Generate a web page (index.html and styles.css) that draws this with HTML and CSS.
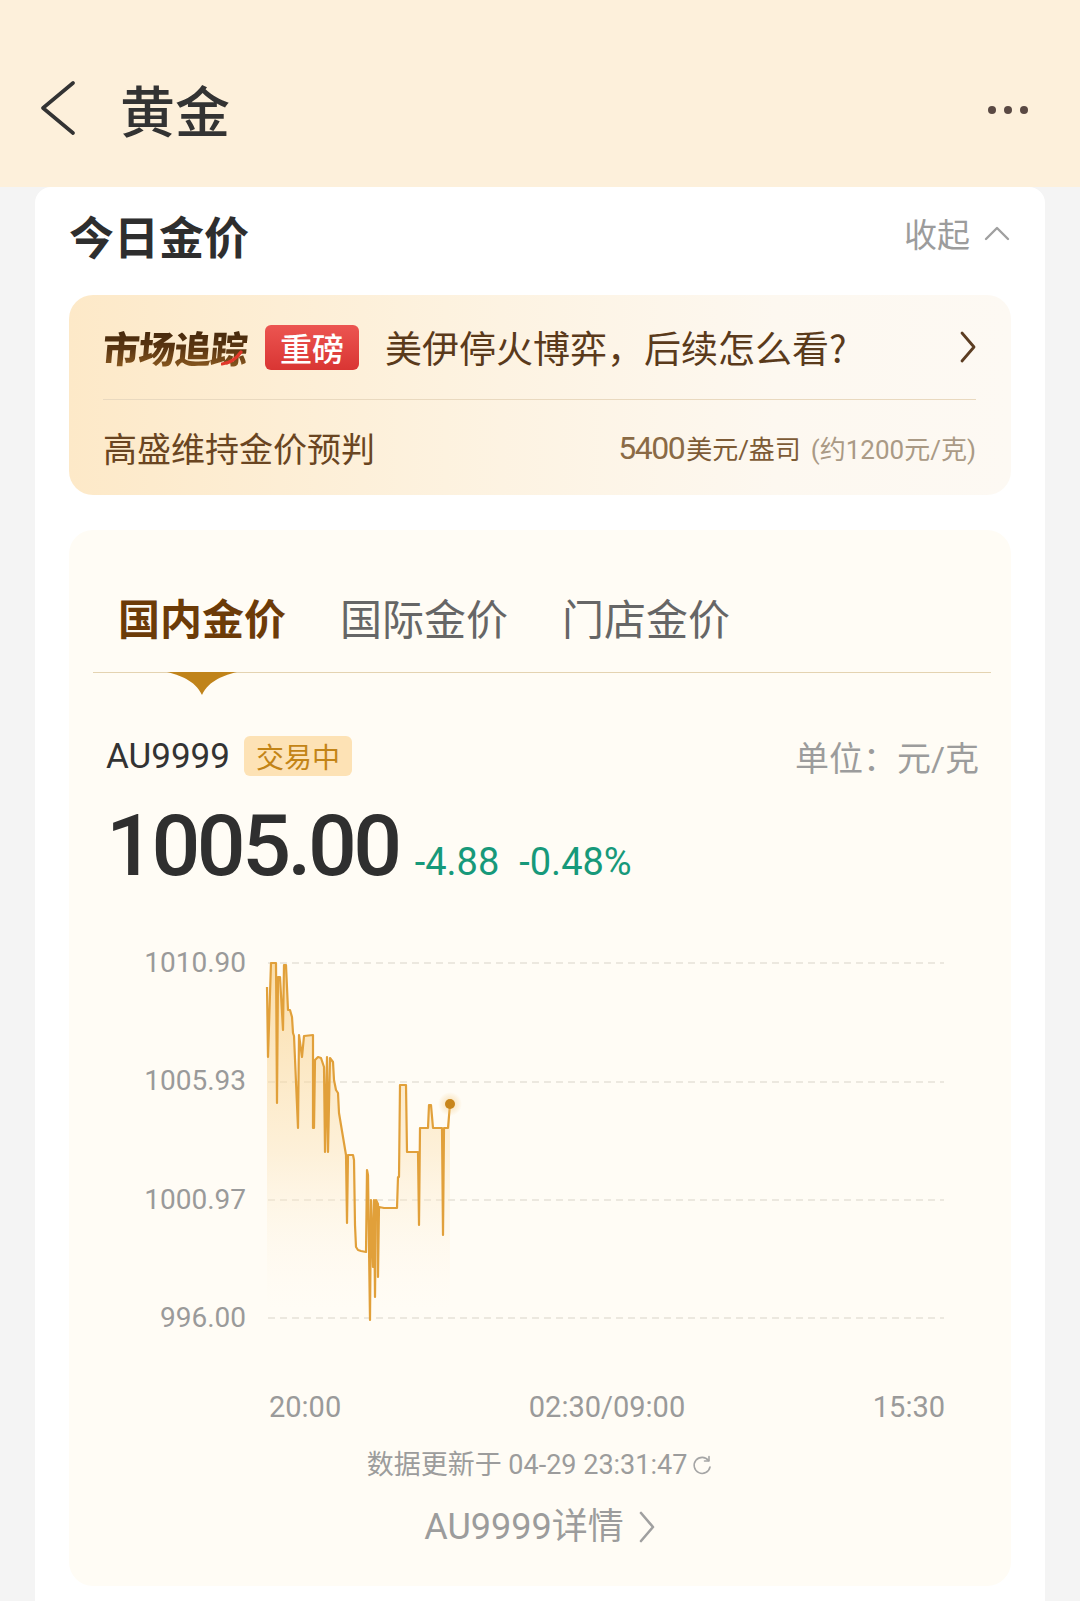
FILE: index.html
```html
<!DOCTYPE html>
<html lang="zh-CN">
<head>
<meta charset="utf-8">
<title>黄金</title>
<link rel="stylesheet" href="styles.css">
</head>
<body>
<header class="topbar">
  <div class="topbar-row">
    <svg class="back" width="36" height="54" viewBox="0 0 36 54"><polyline points="33,2 3,27 33,52" fill="none" stroke="#333" stroke-width="3.6" stroke-linecap="round" stroke-linejoin="round"/></svg>
    <h1 class="title">黄金</h1>
    <div class="more"><span></span><span></span><span></span></div>
  </div>
</header>

<main class="sheet">
  <div class="sheet-head">
    <h2 class="sheet-title">今日金价</h2>
    <div class="collapse">收起<svg width="26" height="15" viewBox="0 0 26 15"><polyline points="2,13 13,2 24,13" fill="none" stroke="#a0a0a0" stroke-width="2.4" stroke-linecap="round" stroke-linejoin="round"/></svg></div>
  </div>

  <div class="tracker">
    <div class="tracker-top">
      <span class="tracker-logo"><span class="logo-text">市场追踪</span><svg class="swoosh" width="22" height="16" viewBox="0 0 22 16"><path d="M1 14 Q12 13 20 2" fill="none" stroke="#e2382a" stroke-width="3.2" stroke-linecap="round"/></svg></span>
      <span class="badge-red">重磅</span>
      <span class="tracker-title">美伊停火博弈，后续怎么看?</span>
      <svg class="tracker-arrow" width="18" height="32" viewBox="0 0 18 32"><polyline points="3,2 15,16 3,30" fill="none" stroke="#5c3d22" stroke-width="2.8" stroke-linecap="round" stroke-linejoin="round"/></svg>
    </div>
    <div class="tracker-line"></div>
    <div class="tracker-bottom">
      <span class="tracker-sub">高盛维持金价预判</span>
      <span class="forecast"><span class="fc-num">5400</span><span class="fc-unit">美元/盎司</span><span class="fc-note">(约1200元/克)</span></span>
    </div>
  </div>

  <section class="price-card">
    <div class="tabs">
      <span class="tab tab-active">国内金价</span>
      <span class="tab">国际金价</span>
      <span class="tab">门店金价</span>
      <svg class="tab-pointer" width="70" height="24" viewBox="0 0 70 24"><path d="M0 0 H70 C58 3 42 8 35 23 C28 8 12 3 0 0 Z" fill="#c0831a"/></svg>
    </div>

    <div class="info-row">
      <span class="code">AU9999</span>
      <span class="status">交易中</span>
      <span class="unit">单位：元/克</span>
    </div>

    <div class="price-row">
      <span class="price">1005.00</span>
      <span class="chg">-4.88</span>
      <span class="chg">-0.48%</span>
    </div>

    <svg class="chart" width="942" height="420" viewBox="68 930 942 420">
      <defs>
        <linearGradient id="fillg" x1="0" y1="963" x2="0" y2="1310" gradientUnits="userSpaceOnUse">
          <stop offset="0" stop-color="#f7c977" stop-opacity="0.6"/>
          <stop offset="0.55" stop-color="#fbe2b6" stop-opacity="0.45"/>
          <stop offset="1" stop-color="#fff6e6" stop-opacity="0"/>
        </linearGradient>
        <radialGradient id="halo">
          <stop offset="0" stop-color="#f2c679" stop-opacity="0.6"/>
          <stop offset="1" stop-color="#f2c679" stop-opacity="0"/>
        </radialGradient>
      </defs>
      <g stroke="#e6e1d8" stroke-width="1.6" stroke-dasharray="7 5">
        <line x1="267" y1="963" x2="943" y2="963"/>
        <line x1="267" y1="1082" x2="943" y2="1082"/>
        <line x1="267" y1="1200" x2="943" y2="1200"/>
        <line x1="267" y1="1318" x2="943" y2="1318"/>
      </g>
      <g class="ylab" text-anchor="end">
        <text x="245" y="972">1010.90</text>
        <text x="245" y="1090">1005.93</text>
        <text x="245" y="1209">1000.97</text>
        <text x="245" y="1327">996.00</text>
      </g>
      <path fill="url(#fillg)" d="M266,987 L267,1057 L270,963 L275,963 L276,1103 L277,977 L279,977 L282,1030 L283,965 L285,965 L287,1010 L289,1010 L291,1017 L292,1033 L293,1036 L297,1128 L298,1035 L301,1057 L303,1036 L312,1035 L312,1128 L313,1128 L314,1060 L317,1057 L320,1058 L323,1067 L324,1152 L326,1057 L327,1152 L329,1058 L332,1062 L333,1080 L335,1090 L337,1093 L338,1113 L343,1143 L345,1155 L346,1223 L347,1155 L352,1155 L353,1160 L354,1225 L355,1247 L357,1250 L360,1251 L365,1252 L366,1170 L367,1175 L369,1320 L370,1200 L372,1267 L373,1200 L374,1297 L375,1200 L377,1204 L377,1277 L378,1207 L383,1208 L396,1208 L397,1177 L398,1177 L399,1085 L405,1085 L406,1152 L417,1152 L418,1225 L419,1128 L427,1128 L428,1105 L430,1105 L432,1128 L441,1128 L442,1235 L443,1128 L447,1128 L449,1104 L449,1330 L266,1330 Z"/>
      <path fill="none" stroke="#e1a03a" stroke-width="2.2" stroke-linejoin="round" d="M266,987 L267,1057 L270,963 L275,963 L276,1103 L277,977 L279,977 L282,1030 L283,965 L285,965 L287,1010 L289,1010 L291,1017 L292,1033 L293,1036 L297,1128 L298,1035 L301,1057 L303,1036 L312,1035 L312,1128 L313,1128 L314,1060 L317,1057 L320,1058 L323,1067 L324,1152 L326,1057 L327,1152 L329,1058 L332,1062 L333,1080 L335,1090 L337,1093 L338,1113 L343,1143 L345,1155 L346,1223 L347,1155 L352,1155 L353,1160 L354,1225 L355,1247 L357,1250 L360,1251 L365,1252 L366,1170 L367,1175 L369,1320 L370,1200 L372,1267 L373,1200 L374,1297 L375,1200 L377,1204 L377,1277 L378,1207 L383,1208 L396,1208 L397,1177 L398,1177 L399,1085 L405,1085 L406,1152 L417,1152 L418,1225 L419,1128 L427,1128 L428,1105 L430,1105 L432,1128 L441,1128 L442,1235 L443,1128 L447,1128 L449,1104"/>
      <circle cx="449" cy="1104" r="12" fill="url(#halo)"/>
      <circle cx="449" cy="1104" r="5" fill="#c8861c"/>
    </svg>

    <div class="xaxis"><span>20:00</span><span>02:30/09:00</span><span>15:30</span></div>

    <div class="updated">数据更新于 04-29 23:31:47<svg class="refresh" width="22" height="22" viewBox="0 0 22 22"><path d="M17.5 5.5 A8 8 0 1 0 19 12" fill="none" stroke="#a5a5a5" stroke-width="1.6" stroke-linecap="round"/><polyline points="18,1.5 18,6 13.5,6" fill="none" stroke="#a5a5a5" stroke-width="1.6" stroke-linecap="round" stroke-linejoin="round"/></svg></div>

    <div class="detail">AU9999详情<svg width="18" height="32" viewBox="0 0 18 32"><polyline points="3,2 15,16 3,30" fill="none" stroke="#a0a0a0" stroke-width="2.6" stroke-linecap="round" stroke-linejoin="round"/></svg></div>
  </section>
</main>
</body>
</html>
```

FILE: styles.css
```css
* { box-sizing: border-box; }

html, body {
  margin: 0;
  padding: 0;
}

body {
  background: #f4f4f4;
  font-family: Roboto, "Noto Sans CJK SC", sans-serif;
  color: #333;
  width: 1080px;
  height: 1601px;
  overflow: hidden;
}

/* ---------- top bar ---------- */
.topbar {
  height: 187px;
  background: #fdf0db;
  padding-top: 80px;
}

.topbar-row {
  height: 56px;
  display: flex;
  align-items: center;
}

.back {
  margin-left: 40px;
  flex: none;
}

.title {
  margin: 0 0 0 44px;
  font-family: "Noto Sans CJK SC", sans-serif;
  font-size: 55px;
  line-height: 56px;
  font-weight: 500;
  color: #333;
}

.more {
  margin-left: auto;
  margin-right: 52px;
  margin-top: 4px;
  display: flex;
  gap: 8px;
}

.more span {
  width: 8px;
  height: 8px;
  border-radius: 50%;
  background: #5a4943;
}

/* ---------- white sheet ---------- */
.sheet {
  margin: 0 35px;
  background: #fff;
  border-radius: 16px 16px 0 0;
  padding: 0 34px 60px;
}

.sheet-head {
  height: 96px;
  display: flex;
  align-items: center;
  justify-content: space-between;
}

.sheet-title {
  margin: 0;
  font-family: "Noto Sans CJK SC", sans-serif;
  font-size: 45px;
  line-height: 1;
  font-weight: 700;
  color: #2e2e2e;
}

.collapse {
  display: flex;
  align-items: center;
  font-family: "Noto Sans CJK SC", sans-serif;
  font-size: 33px;
  color: #9c9c9c;
  margin-top: -4px;
}

.collapse svg {
  margin-left: 14px;
  margin-right: 1px;
}

/* ---------- market tracker ---------- */
.tracker {
  display: block;
  margin-top: 12px;
  height: 200px;
  border-radius: 24px;
  background: linear-gradient(90deg, #fde9c8 0%, #fdf2df 40%, #fdf8f0 75%, #fdf9f3 100%);
  padding: 0 35px 0 34px;
}

.tracker-top {
  height: 104px;
  display: flex;
  align-items: center;
}

.tracker-logo {
  position: relative;
  display: inline-block;
}

.logo-text {
  display: inline-block;
  font-family: "Noto Sans CJK SC", sans-serif;
  font-size: 37px;
  font-weight: 900;
  letter-spacing: -1px;
  transform: skewX(-5deg);
  background: linear-gradient(180deg, #3a2109 0%, #5c3712 55%, #9a6524 100%);
  -webkit-background-clip: text;
  background-clip: text;
  color: transparent;
}

.swoosh {
  position: absolute;
  left: 118px;
  top: 30px;
}

.badge-red {
  margin-left: 18px;
  height: 45px;
  padding: 0 15px;
  border-radius: 6px;
  background: linear-gradient(180deg, #ec5551 0%, #d93533 100%);
  color: #fff;
  font-family: "Noto Sans CJK SC", sans-serif;
  font-size: 32px;
  line-height: 45px;
  font-weight: 500;
}

.tracker-title {
  margin-left: 26px;
  font-family: "Noto Sans CJK SC", sans-serif;
  font-size: 37px;
  color: #5a3a1b;
}

.tracker-arrow {
  margin-left: auto;
  margin-right: -1px;
}

.tracker-line {
  height: 1px;
  background: #e9d9bf;
}

.tracker-bottom {
  height: 95px;
  display: flex;
  align-items: center;
  justify-content: space-between;
}

.tracker-sub {
  font-family: "Noto Sans CJK SC", sans-serif;
  font-size: 34px;
  color: #6a4521;
}

.forecast {
  display: flex;
  align-items: baseline;
}

.fc-num {
  font-size: 32px;
  letter-spacing: -1.5px;
  color: #8a6a45;
}

.fc-unit {
  font-size: 26px;
  color: #7d5b36;
  margin-left: 2px;
}

.fc-note {
  font-size: 26px;
  color: #aa9a85;
  margin-left: 10px;
}

/* ---------- price card ---------- */
.price-card {
  margin-top: 35px;
  background: #fffcf5;
  border-radius: 24px;
  padding-bottom: 41px;
}

.tabs {
  position: relative;
  margin: 0 20px 0 24px;
  padding: 66px 0 34px 25px;
  border-bottom: 1px solid #e4d3b1;
  display: flex;
  gap: 54px;
}

.tab {
  font-family: "Noto Sans CJK SC", sans-serif;
  font-size: 42px;
  line-height: 42px;
  color: #666;
}

.tab-active {
  font-weight: 700;
  color: #6c3b08;
}

.tab-pointer {
  position: absolute;
  left: 74px;
  top: 100%;
}

.info-row {
  margin: 63px 32px 0 37px;
  height: 40px;
  display: flex;
  align-items: center;
}

.code {
  font-size: 35px;
  color: #333;
}

.status {
  margin-left: 14px;
  height: 40px;
  padding: 0 12px;
  border-radius: 6px;
  background: #fde2b5;
  color: #c38416;
  font-family: "Noto Sans CJK SC", sans-serif;
  font-size: 28px;
  line-height: 40px;
}

.unit {
  margin-left: auto;
  font-size: 34px;
  color: #9c9c9c;
}

.price-row {
  margin: 28px 0 0 37px;
  display: flex;
  align-items: baseline;
}

.price {
  font-size: 86px;
  line-height: 84px;
  font-weight: 500;
  letter-spacing: -3.5px;
  color: #2f2f2f;
}

.chg {
  margin-left: 16px;
  font-size: 38px;
  color: #17997a;
}

.chg + .chg {
  margin-left: 20px;
}

.chart {
  display: block;
  margin-top: 42px;
}

.ylab text {
  font-family: Roboto, sans-serif;
  font-size: 28px;
  fill: #9a9a9a;
}

.xaxis {
  margin-top: 43px;
  padding: 0 66px 0 200px;
  display: flex;
  justify-content: space-between;
  font-size: 29px;
  line-height: 29px;
  color: #9a9a9a;
}

.updated {
  margin-top: 30px;
  display: flex;
  justify-content: center;
  align-items: center;
  font-size: 27px;
  line-height: 27px;
  color: #9c9c9c;
}

.refresh {
  margin-left: 4px;
}

.detail {
  margin-top: 30px;
  display: flex;
  justify-content: center;
  align-items: center;
  font-size: 36px;
  line-height: 36px;
  color: #9c9c9c;
}

.detail svg {
  margin-left: 14px;
}
```
